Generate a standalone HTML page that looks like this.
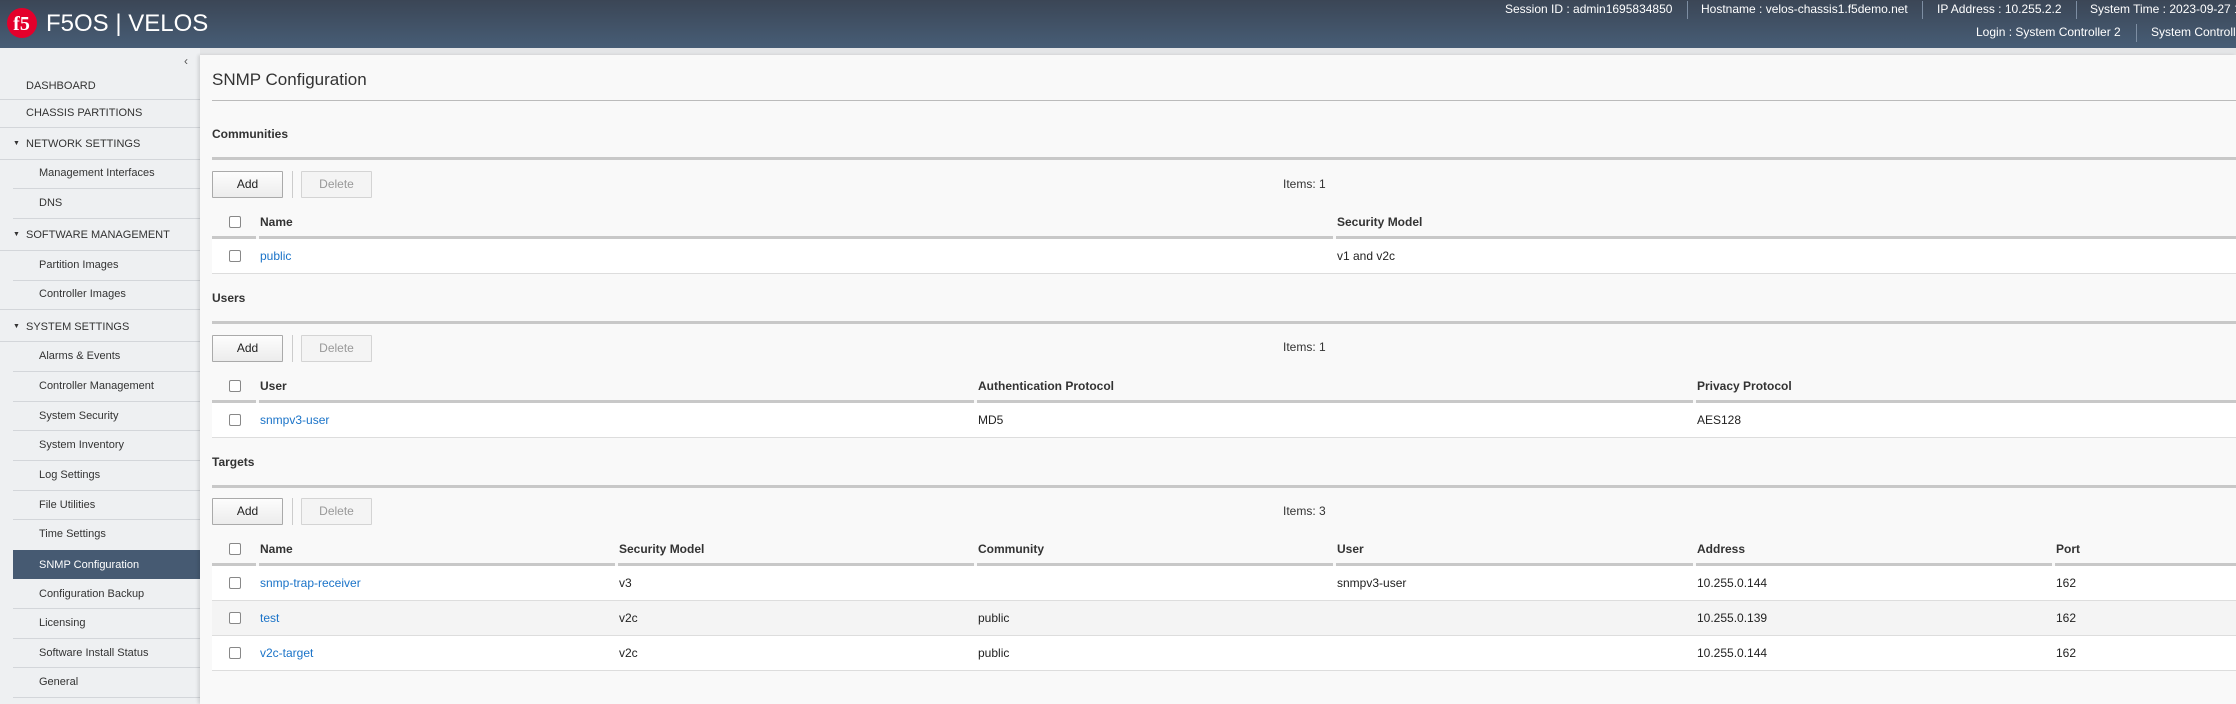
<!DOCTYPE html>
<html><head><meta charset="utf-8"><style>
*{margin:0;padding:0;box-sizing:border-box}
body{width:2236px;height:704px;overflow:hidden;background:#e4e5e7;font-family:"Liberation Sans",Arial,sans-serif;position:relative;color:#222}
.a{position:absolute;white-space:nowrap}
#hdr{position:absolute;left:0;top:0;width:2236px;height:48px;background:linear-gradient(180deg,#3b4656 0%,#475d76 100%);overflow:hidden}
.ht{position:absolute;color:#fff;font-size:12px;line-height:14px;white-space:nowrap}
.hs{position:absolute;width:1px;height:18px;background:#7d8ea3}
#side{position:absolute;left:0;top:48px;width:200px;height:656px;background:#eef0f2}
.si{position:absolute;font-size:11px;color:#333;line-height:14px;white-space:nowrap}
.sl{position:absolute;height:1px;background:#d3d6da}
#main{position:absolute;left:200px;top:55px;width:2036px;height:649px;background:#f9f9f9;box-shadow:-2px 0 3px rgba(0,0,0,.12)}
.m{position:absolute;white-space:nowrap;font-size:12px;line-height:14px}
.b{font-weight:bold;color:#333}
.lk{color:#1a73c8}
.btn{position:absolute;width:71px;height:27px;border:1px solid #aaa;background:linear-gradient(#fdfdfd,#ececec);font-size:12px;text-align:center;line-height:25px;color:#222;border-radius:1px}
.btn.d{border-color:#d4d4d4;color:#999;background:#f4f4f4}
.cb{position:absolute;width:12px;height:12px;border:1px solid #888;background:#fff;border-radius:2px}
.thick{position:absolute;height:3px;background:#c8c8c8}
.row{position:absolute;left:212px;width:2024px;height:35px;background:#fff;border-bottom:1px solid #ddd}
</style></head><body>
<div id="hdr">
 <svg class="a" style="left:6px;top:7px" width="32" height="32" viewBox="0 0 32 32"><circle cx="16" cy="16" r="15" fill="#e4002b"/><text x="15.5" y="23" font-family="Liberation Serif,serif" font-weight="bold" font-size="20" fill="#fff" text-anchor="middle">f5</text></svg>
 <div class="a" style="left:46px;top:10px;color:#fff;font-size:24px;line-height:28px;font-weight:300">F5OS | VELOS</div>
 <div class="ht" style="left:1505px;top:2px">Session ID : admin1695834850</div>
 <div class="hs" style="left:1687px;top:1px"></div>
 <div class="ht" style="left:1701px;top:2px">Hostname : velos-chassis1.f5demo.net</div>
 <div class="hs" style="left:1922px;top:1px"></div>
 <div class="ht" style="left:1937px;top:2px">IP Address : 10.255.2.2</div>
 <div class="hs" style="left:2076px;top:1px"></div>
 <div class="ht" style="left:2090px;top:2px">System Time : 2023-09-27 14:00</div>
 <div class="ht" style="left:1976px;top:25px">Login : System Controller 2</div>
 <div class="hs" style="left:2136px;top:24px"></div>
 <div class="ht" style="left:2151px;top:25px">System Controller</div>
</div>
<div id="side"></div>
<div class="a" style="left:184px;top:54px;font-size:12px;color:#555">&#8249;</div>
<div class="si" style="left:26px;top:79px">DASHBOARD</div><div class="sl" style="left:0;top:99px;width:200px"></div>
<div class="si" style="left:26px;top:106px">CHASSIS PARTITIONS</div><div class="sl" style="left:0;top:127px;width:200px"></div>
<div class="si" style="left:13px;top:137px;font-size:7px">&#9660;</div><div class="si" style="left:26px;top:137px">NETWORK SETTINGS</div><div class="sl" style="left:0;top:159px;width:200px"></div>
<div class="si" style="left:39px;top:166px">Management Interfaces</div><div class="sl" style="left:13px;top:188px;width:187px"></div>
<div class="si" style="left:39px;top:196px">DNS</div><div class="sl" style="left:13px;top:218px;width:187px"></div>
<div class="si" style="left:13px;top:228px;font-size:7px">&#9660;</div><div class="si" style="left:26px;top:228px">SOFTWARE MANAGEMENT</div><div class="sl" style="left:0;top:250px;width:200px"></div>
<div class="si" style="left:39px;top:258px">Partition Images</div><div class="sl" style="left:13px;top:280px;width:187px"></div>
<div class="si" style="left:39px;top:287px">Controller Images</div><div class="sl" style="left:0;top:309px;width:200px"></div>
<div class="si" style="left:13px;top:320px;font-size:7px">&#9660;</div><div class="si" style="left:26px;top:320px">SYSTEM SETTINGS</div><div class="sl" style="left:0;top:341px;width:200px"></div>
<div class="si" style="left:39px;top:349px">Alarms &amp; Events</div><div class="sl" style="left:13px;top:371px;width:187px"></div>
<div class="si" style="left:39px;top:379px">Controller Management</div><div class="sl" style="left:13px;top:401px;width:187px"></div>
<div class="si" style="left:39px;top:409px">System Security</div><div class="sl" style="left:13px;top:430px;width:187px"></div>
<div class="si" style="left:39px;top:438px">System Inventory</div><div class="sl" style="left:13px;top:460px;width:187px"></div>
<div class="si" style="left:39px;top:468px">Log Settings</div><div class="sl" style="left:13px;top:490px;width:187px"></div>
<div class="si" style="left:39px;top:498px">File Utilities</div><div class="sl" style="left:13px;top:519px;width:187px"></div>
<div class="si" style="left:39px;top:527px">Time Settings</div>
<div class="a" style="left:13px;top:550px;width:187px;height:29px;background:#465a72"></div>
<div class="si" style="left:39px;top:558px;color:#fff">SNMP Configuration</div>
<div class="si" style="left:39px;top:587px">Configuration Backup</div><div class="sl" style="left:13px;top:608px;width:187px"></div>
<div class="si" style="left:39px;top:616px">Licensing</div><div class="sl" style="left:13px;top:638px;width:187px"></div>
<div class="si" style="left:39px;top:646px">Software Install Status</div><div class="sl" style="left:13px;top:667px;width:187px"></div>
<div class="si" style="left:39px;top:675px">General</div><div class="sl" style="left:13px;top:697px;width:187px"></div>

<div id="main"></div>
<div class="m" style="left:212px;top:70px;font-size:17px;line-height:20px;color:#333">SNMP Configuration</div>
<div class="a" style="left:212px;top:100px;width:2024px;height:1px;background:#bbb"></div>

<div class="m b" style="left:212px;top:127px">Communities</div>
<div class="thick" style="left:212px;top:157px;width:2024px"></div>
<div class="btn" style="left:212px;top:171px">Add</div>
<div class="a" style="left:292px;top:171px;width:1px;height:27px;background:#ccc"></div>
<div class="btn d" style="left:301px;top:171px">Delete</div>
<div class="m" style="left:1283px;top:177px;color:#333">Items: 1</div>
<div class="cb" style="left:229px;top:216px"></div>
<div class="m b" style="left:260px;top:215px">Name</div>
<div class="m b" style="left:1337px;top:215px">Security Model</div>
<div class="thick" style="left:212px;top:236px;width:44px"></div><div class="thick" style="left:259px;top:236px;width:1074px"></div><div class="thick" style="left:1336px;top:236px;width:900px"></div>
<div class="row" style="top:239px"></div>
<div class="cb" style="left:229px;top:250px"></div>
<div class="m lk" style="left:260px;top:249px">public</div>
<div class="m" style="left:1337px;top:249px">v1 and v2c</div>

<div class="m b" style="left:212px;top:291px">Users</div>
<div class="thick" style="left:212px;top:321px;width:2024px"></div>
<div class="btn" style="left:212px;top:335px">Add</div>
<div class="a" style="left:292px;top:335px;width:1px;height:27px;background:#ccc"></div>
<div class="btn d" style="left:301px;top:335px">Delete</div>
<div class="m" style="left:1283px;top:340px;color:#333">Items: 1</div>
<div class="cb" style="left:229px;top:380px"></div>
<div class="m b" style="left:260px;top:379px">User</div>
<div class="m b" style="left:978px;top:379px">Authentication Protocol</div>
<div class="m b" style="left:1697px;top:379px">Privacy Protocol</div>
<div class="thick" style="left:212px;top:400px;width:44px"></div><div class="thick" style="left:259px;top:400px;width:715px"></div><div class="thick" style="left:977px;top:400px;width:716px"></div><div class="thick" style="left:1696px;top:400px;width:540px"></div>
<div class="row" style="top:403px"></div>
<div class="cb" style="left:229px;top:414px"></div>
<div class="m lk" style="left:260px;top:413px">snmpv3-user</div>
<div class="m" style="left:978px;top:413px">MD5</div>
<div class="m" style="left:1697px;top:413px">AES128</div>

<div class="m b" style="left:212px;top:455px">Targets</div>
<div class="thick" style="left:212px;top:485px;width:2024px"></div>
<div class="btn" style="left:212px;top:498px">Add</div>
<div class="a" style="left:292px;top:498px;width:1px;height:27px;background:#ccc"></div>
<div class="btn d" style="left:301px;top:498px">Delete</div>
<div class="m" style="left:1283px;top:504px;color:#333">Items: 3</div>
<div class="cb" style="left:229px;top:543px"></div>
<div class="m b" style="left:260px;top:542px">Name</div>
<div class="m b" style="left:619px;top:542px">Security Model</div>
<div class="m b" style="left:978px;top:542px">Community</div>
<div class="m b" style="left:1337px;top:542px">User</div>
<div class="m b" style="left:1697px;top:542px">Address</div>
<div class="m b" style="left:2056px;top:542px">Port</div>
<div class="thick" style="left:212px;top:563px;width:44px"></div><div class="thick" style="left:259px;top:563px;width:356px"></div><div class="thick" style="left:618px;top:563px;width:356px"></div><div class="thick" style="left:977px;top:563px;width:356px"></div><div class="thick" style="left:1336px;top:563px;width:357px"></div><div class="thick" style="left:1696px;top:563px;width:356px"></div><div class="thick" style="left:2055px;top:563px;width:181px"></div>
<div class="row" style="top:566px"></div>
<div class="row" style="top:601px;background:#f4f4f4"></div>
<div class="row" style="top:636px"></div>
<div class="cb" style="left:229px;top:577px"></div><div class="m lk" style="left:260px;top:576px">snmp-trap-receiver</div><div class="m" style="left:619px;top:576px">v3</div><div class="m" style="left:1337px;top:576px">snmpv3-user</div><div class="m" style="left:1697px;top:576px">10.255.0.144</div><div class="m" style="left:2056px;top:576px">162</div>
<div class="cb" style="left:229px;top:612px"></div><div class="m lk" style="left:260px;top:611px">test</div><div class="m" style="left:619px;top:611px">v2c</div><div class="m" style="left:978px;top:611px">public</div><div class="m" style="left:1697px;top:611px">10.255.0.139</div><div class="m" style="left:2056px;top:611px">162</div>
<div class="cb" style="left:229px;top:647px"></div><div class="m lk" style="left:260px;top:646px">v2c-target</div><div class="m" style="left:619px;top:646px">v2c</div><div class="m" style="left:978px;top:646px">public</div><div class="m" style="left:1697px;top:646px">10.255.0.144</div><div class="m" style="left:2056px;top:646px">162</div>
</body></html>
